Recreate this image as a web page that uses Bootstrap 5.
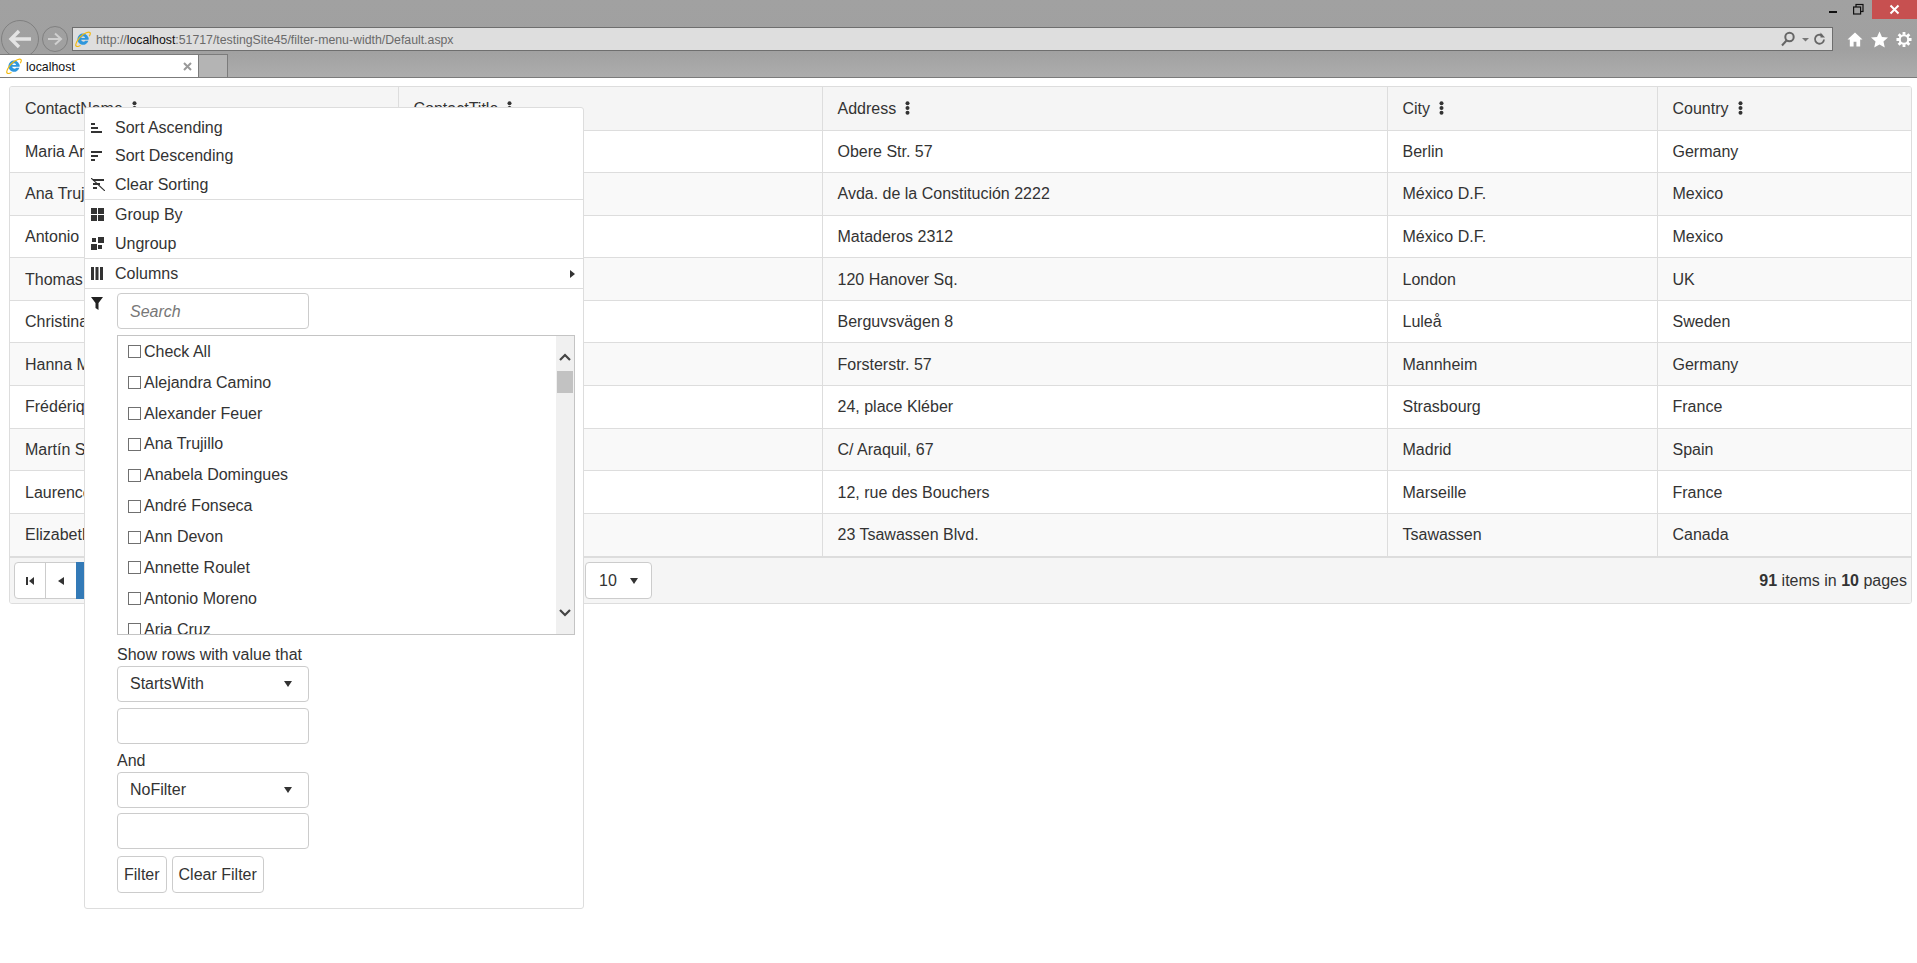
<!DOCTYPE html>
<html lang="en">
<head>
  <meta charset="UTF-8" />
  <title>localhost</title>
  <link href="https://cdn.jsdelivr.net/npm/bootstrap@5.3.2/dist/css/bootstrap.min.css" rel="stylesheet">
  <style>
    body { font-family: "Liberation Sans", Arial, sans-serif; font-size: 16px; color: #333; background: #fff; height: 963px; overflow: hidden; }

    /* browser chrome */
    .ie-chrome { height: 78px; background: linear-gradient(#a1a1a1 0, #a0a0a0 50px, #adadad 77px); border-bottom: 1px solid #7b7b7b; }
    .ie-winbar { height: 28px; }
    .ie-close { width: 45px; height: 19px; background: #c75050; }
    .ie-addr-row { height: 22px; padding: 0 5px 0 1px; }
    .ie-back { width: 38px; height: 38px; border: 1px solid #808080; border-radius: 50%; flex: none; position: relative; z-index: 1; }
    .ie-fwd { width: 26px; height: 26px; border: 1px solid #808080; border-radius: 50%; flex: none; margin: 0 4px 0 3px; }
    .ie-addr { flex: 1; height: 24px; background: #dedede; border: 1px solid #6e6e6e; font-size: 12.3px; color: #6a6a6a; padding: 0 5px 0 2px; white-space: nowrap; }
    .ie-addr b { font-weight: 400; color: #111; }
    .ie-addr-text { padding-top: 2px; }
    .ie-tools { width: 79px; padding-left: 14px; gap: 8px; }
    .ie-tabs { height: 23px; margin-top: 4px; }
    .ie-tab { width: 199px; height: 23px; background: #fff; border: 1px solid #7b7b7b; border-width: 1px 1px 0 0; font-size: 12.4px; color: #111; padding: 0 6px 0 6px; position: relative; z-index: 2; }
    .ie-tab-text { margin-left: -1px; padding-top: 2px; }
    .ie-newtab { width: 29px; height: 23px; background: #b4b4b4; border: 1px solid #7b7b7b; border-width: 1px 1px 0 0; }
    .ie-logo { flex: none; margin-right: 5px; }

    /* grid */
    .gv-wrap { margin: 8px 5px 0 9px; border: 1px solid #ddd; border-radius: 3px; overflow: hidden; }
    .gv-table { table-layout: fixed; margin: 0; width: 100%; --bs-table-color: #333; --bs-table-border-color: #ddd; }
    .gv-table th { background: #f5f5f5; height: 43px; font-weight: 400; padding: 1px 15px 0; vertical-align: middle; white-space: nowrap; }
    .gv-table td { height: 42.6px; padding: 1px 15px 0; vertical-align: middle; white-space: nowrap; }
    .gv-table tbody tr:nth-child(even) td { background: #f9f9f9; }
    .gv-table th + th, .gv-table td + td { border-left: 1px solid #ddd; }
    .gv-table tbody tr:last-child td { border-bottom: 0; }
    .kebab { margin-left: 9px; vertical-align: -1px; }
    .gv-pager { height: 47px; background: #f5f5f5; border-top: 2px solid #ddd; padding: 1px 4px 0; }
    .pg-group { height: 37px; }
    .pg-btn { width: 32px; height: 37px; background: #fff; border: 1px solid #ccc; margin-left: -1px; }
    .pg-btn:first-child { margin-left: 0; border-radius: 4px 0 0 4px; }
    .pg-num { background: #337ab7; border-color: #337ab7; color: #fff; width: 40px; }
    .pg-spacer { width: 345px; flex: none; }
    .pg-size { width: 67px; height: 37px; background: #fff; border: 1px solid #ccc; border-radius: 4px; padding: 0 13px; margin-left: 124px; }
    .caret-dn { width: 0; height: 0; border: 4.5px solid transparent; border-top: 6px solid #333; border-bottom: 0; }

    /* column menu, lies over the grid */
    .col-menu { position: absolute; left: 84px; top: 107px; width: 500px; height: 802px; background: #fff; border: 1px solid #ddd; border-radius: 3px; z-index: 5; padding-top: 5.5px; }
    .cm-item { height: 28.6px; }
    .cm-sep-row { height: 29.5px; }
    .cm-ico { width: 30px; flex: none; padding-left: 6px; display: flex; }
    .cm-ico-wide { width: 32px; }
    .cm-sep { border-top: 1px solid #ddd; }
    .cm-filter { padding-top: 4.5px; }
    .cm-body { width: 458px; }
    .cm-field { width: 192px; height: 36px; border: 1px solid #ccc; border-radius: 4px; background: #fff; }
    .cm-search { padding: 0 12px; color: #777; font-style: italic; line-height: 35px; }
    .cm-list { height: 300px; margin-top: 6px; border: 1px solid #c4c4c4; }
    .cm-scroll { flex: 1; overflow: hidden; padding: 0 0 0 10px; }
    .cm-check { height: 30.9px; flex: none; }
    .cm-box { width: 13px; height: 13px; border: 1px solid #707070; margin-right: 3px; flex: none; }
    .cm-bar { width: 18px; background: #f0f0f0; padding: 15px 1px 15px; }
    .cm-thumb { height: 22px; background: #c2c2c2; margin: 8px 0 auto; }
    .cm-sel { padding: 0 12px; }
    .cm-label { height: 23px; line-height: 23px; }
    .cm-label-a { margin-top: 8px; }
    .cm-label-b { margin-top: 5px; }
    .cm-gap-s { margin-top: 0; }
    .cm-gap-m { margin-top: 6px; }
    .cm-gap-l { margin-top: 5px; }
    .cm-btns { margin-top: 7px; gap: 5px; }
    .cm-btn { height: 37px; border: 1px solid #ccc; border-radius: 4px; background: #fff; padding: 0 6px; color: #333; }
  </style>
</head>
<body>
  <div class="ie-chrome">
    <div class="ie-winbar d-flex justify-content-end">
      <div class="d-flex align-items-start">
        <svg width="8" height="19" class="me-3"><rect y="11" width="8" height="2" fill="#111"/></svg>
        <svg width="11" height="15" class="me-2" fill="none" stroke="#111" stroke-width="1.2"><rect x="3" y="4.500" width="7" height="7"/><rect x=".6" y="7" width="7" height="7" fill="#a0a0a0"/></svg>
        <div class="ie-close d-flex align-items-center justify-content-center">
          <svg width="11" height="11" stroke="#fff" stroke-width="2"><path d="M1.500 1.500l8 8M9.500 1.500l-8 8"/></svg>
        </div>
      </div>
    </div>
    <div class="ie-addr-row d-flex align-items-center">
      <div class="ie-back d-flex align-items-center justify-content-center">
        <svg width="24" height="20" fill="none" stroke="#e4e4e4" stroke-width="3.4"><path d="M23 10H3M11 2l-8 8 8 8"/></svg>
      </div>
      <div class="ie-fwd d-flex align-items-center justify-content-center">
        <svg width="16" height="14" fill="none" stroke="#d0d0d0" stroke-width="2"><path d="M1 7h13M8 1.500l6 5.500-6 5.500"/></svg>
      </div>
      <div class="ie-addr d-flex align-items-center">
        <svg class="ie-logo" width="16" height="16" viewBox="0 0 16 16">
          <path d="M8 2.600a5.600 5.600 0 0 1 5.600 6.200H6.200a2.200 2.200 0 0 0 4 .9h3.200A5.600 5.600 0 1 1 8 2.600zM6.200 6.900h3.900a2 2 0 0 0-3.900 0z" fill="#2f97dc" fill-rule="evenodd"/>
          <path d="M1 15C0 13.500 2.500 7.500 8 3.600c3-2 6-3 7-2 .7.900 0 2.400-.7 3.600M1 15c1 .9 3 .3 4.500-.5" fill="none" stroke="#f2b90f" stroke-width="1.200"/>
        </svg>
        <span class="ie-addr-text">http://<b>localhost</b>:51717/testingSite45/filter-menu-width/Default.aspx</span>
        <svg width="46" height="16" class="ms-auto" fill="none" stroke="#666" stroke-width="2"><circle cx="8.500" cy="6" r="4.200"/><path d="M5.500 9.500L1 14.500"/><path d="M21 7h7l-3.500 3.500z" fill="#777" stroke="none"/><path d="M43 8.500a4.500 4.500 0 1 1-2-4" stroke-width="1.800"/><path d="M39.500 1.500v5h4.500z" fill="#666" stroke="none"/></svg>
      </div>
      <div class="ie-tools d-flex align-items-center">
        <svg width="16" height="17" viewBox="0 0 17 17" fill="#fff"><path d="M8.500 1L.5 8.500h2.500V16h4v-5h3v5h4V8.500h2.500z"/></svg>
        <svg width="17" height="17" viewBox="0 0 18 17" fill="#fff"><path d="M9 0l2.600 5.800 6.400.7-4.800 4.200 1.400 6.300L9 13.800 3.400 17l1.400-6.300L0 6.500l6.400-.7z"/></svg>
        <svg width="16" height="17" viewBox="0 0 17 17" fill="none" stroke="#fff"><circle cx="8.500" cy="8.500" r="4.500" stroke-width="2.200"/><path d="M8.500 .5v3M8.500 13.500v3M.5 8.500h3M13.500 8.500h3M2.800 2.800L5 5M12 12l2.200 2.200M14.200 2.800L12 5M5 12l-2.200 2.200" stroke-width="3"/></svg>
      </div>
    </div>
    <div class="ie-tabs d-flex">
      <div class="ie-tab d-flex align-items-center">
        <svg class="ie-logo" width="16" height="16" viewBox="0 0 16 16">
          <path d="M8 2.600a5.600 5.600 0 0 1 5.600 6.200H6.200a2.200 2.200 0 0 0 4 .9h3.200A5.600 5.600 0 1 1 8 2.600zM6.200 6.900h3.900a2 2 0 0 0-3.900 0z" fill="#2f97dc" fill-rule="evenodd"/>
          <path d="M1 15C0 13.500 2.500 7.500 8 3.600c3-2 6-3 7-2 .7.900 0 2.400-.7 3.600M1 15c1 .9 3 .3 4.500-.5" fill="none" stroke="#f2b90f" stroke-width="1.200"/>
        </svg>
        <span class="ie-tab-text">localhost</span>
        <svg width="9" height="9" class="ms-auto" stroke="#999" stroke-width="2"><path d="M1 1l7 7M8 1L1 8"/></svg>
      </div>
      <div class="ie-newtab"></div>
    </div>
  </div>

  <div class="gv-wrap">
    <table class="table gv-table">
      <colgroup><col style="width:388px"><col style="width:424px"><col style="width:565px"><col style="width:270px"><col></colgroup>
      <thead>
        <tr>
          <th>ContactName<svg class="kebab" width="5" height="14" fill="#333"><circle cx="2.500" cy="2.300" r="2"/><circle cx="2.500" cy="7" r="2"/><circle cx="2.500" cy="11.700" r="2"/></svg></th>
          <th>ContactTitle<svg class="kebab" width="5" height="14" fill="#333"><circle cx="2.500" cy="2.300" r="2"/><circle cx="2.500" cy="7" r="2"/><circle cx="2.500" cy="11.700" r="2"/></svg></th>
          <th>Address<svg class="kebab" width="5" height="14" fill="#333"><circle cx="2.500" cy="2.300" r="2"/><circle cx="2.500" cy="7" r="2"/><circle cx="2.500" cy="11.700" r="2"/></svg></th>
          <th>City<svg class="kebab" width="5" height="14" fill="#333"><circle cx="2.500" cy="2.300" r="2"/><circle cx="2.500" cy="7" r="2"/><circle cx="2.500" cy="11.700" r="2"/></svg></th>
          <th>Country<svg class="kebab" width="5" height="14" fill="#333"><circle cx="2.500" cy="2.300" r="2"/><circle cx="2.500" cy="7" r="2"/><circle cx="2.500" cy="11.700" r="2"/></svg></th>
        </tr>
      </thead>
      <tbody>
        <tr><td>Maria Anders</td><td>Sales Representative</td><td>Obere Str. 57</td><td>Berlin</td><td>Germany</td></tr>
        <tr><td>Ana Trujillo</td><td>Owner</td><td>Avda. de la Constitución 2222</td><td>México D.F.</td><td>Mexico</td></tr>
        <tr><td>Antonio Moreno</td><td>Owner</td><td>Mataderos 2312</td><td>México D.F.</td><td>Mexico</td></tr>
        <tr><td>Thomas Hardy</td><td>Sales Representative</td><td>120 Hanover Sq.</td><td>London</td><td>UK</td></tr>
        <tr><td>Christina Berglund</td><td>Order Administrator</td><td>Berguvsvägen 8</td><td>Luleå</td><td>Sweden</td></tr>
        <tr><td>Hanna Moos</td><td>Sales Representative</td><td>Forsterstr. 57</td><td>Mannheim</td><td>Germany</td></tr>
        <tr><td>Frédérique Citeaux</td><td>Marketing Manager</td><td>24, place Kléber</td><td>Strasbourg</td><td>France</td></tr>
        <tr><td>Martín Sommer</td><td>Owner</td><td>C/ Araquil, 67</td><td>Madrid</td><td>Spain</td></tr>
        <tr><td>Laurence Lebihan</td><td>Owner</td><td>12, rue des Bouchers</td><td>Marseille</td><td>France</td></tr>
        <tr><td>Elizabeth Lincoln</td><td>Accounting Manager</td><td>23 Tsawassen Blvd.</td><td>Tsawassen</td><td>Canada</td></tr>
      </tbody>
    </table>
    <div class="gv-pager d-flex align-items-center">
      <div class="pg-group d-flex">
        <div class="pg-btn d-flex align-items-center justify-content-center"><svg width="8" height="8" fill="#333"><rect width="2" height="8"/><path d="M8 0v8L3 4z"/></svg></div>
        <div class="pg-btn d-flex align-items-center justify-content-center"><svg width="6" height="8" fill="#333"><path d="M6 0v8L0 4z"/></svg></div>
        <div class="pg-btn pg-num d-flex align-items-center justify-content-center">1</div>
      </div>
      <div class="pg-spacer"></div>
      <div class="pg-size d-flex align-items-center justify-content-between"><span>10</span><span class="caret-dn"></span></div>
      <div class="ms-auto"><b>91</b> items in <b>10</b> pages</div>
    </div>
  </div>

  <div class="col-menu">
    <div class="cm-item d-flex align-items-center">
      <span class="cm-ico"><svg width="12" height="10" fill="#333"><rect y="0" width="4" height="2"/><rect y="4" width="7" height="2"/><rect y="8" width="11" height="2"/></svg></span>Sort Ascending
    </div>
    <div class="cm-item d-flex align-items-center">
      <span class="cm-ico"><svg width="12" height="10" fill="#333"><rect y="0" width="11" height="2"/><rect y="4" width="7" height="2"/><rect y="8" width="4" height="2"/></svg></span>Sort Descending
    </div>
    <div class="cm-item d-flex align-items-center">
      <span class="cm-ico"><svg width="14" height="13" fill="#333"><rect x="2" y="1" width="11" height="2"/><rect x="2" y="5" width="7" height="2"/><rect x="2" y="9" width="4" height="2"/><path d="M0 0l14 13" stroke="#333" stroke-width="1.200"/></svg></span>Clear Sorting
    </div>
    <div class="cm-sep-row cm-sep d-flex align-items-center">
      <span class="cm-ico"><svg width="13" height="13" fill="#333"><rect width="6" height="6"/><rect x="7" width="6" height="6"/><rect y="7" width="6" height="6"/><rect x="7" y="7" width="6" height="6"/></svg></span>Group By
    </div>
    <div class="cm-sep-row d-flex align-items-center">
      <span class="cm-ico"><svg width="13" height="13" fill="#333"><rect y="1" x="1" width="4" height="4"/><rect x="7" width="6" height="6"/><rect y="7" width="6" height="6"/><rect x="7" y="8" width="4" height="4"/></svg></span>Ungroup
    </div>
    <div class="cm-sep-row cm-sep d-flex align-items-center justify-content-between">
      <div class="d-flex align-items-center"><span class="cm-ico"><svg width="12" height="13" fill="#333"><rect width="3" height="13"/><rect x="4.500" width="3" height="13"/><rect x="9" width="3" height="13"/></svg></span>Columns</div>
      <svg width="5" height="8" class="me-2" fill="#333"><path d="M0 0l5 4-5 4z"/></svg>
    </div>
    <div class="cm-filter cm-sep d-flex">
      <span class="cm-ico cm-ico-wide pt-1"><svg width="12" height="13" fill="#222"><path d="M0 0h12L7.500 6v7l-3-2V6z"/></svg></span>
      <div class="cm-body d-flex flex-column align-items-start">
        <div class="cm-field cm-search">Search</div>
        <div class="cm-list d-flex align-self-stretch">
          <div class="cm-scroll d-flex flex-column">
            <div class="cm-check d-flex align-items-center"><span class="cm-box"></span>Check All</div>
            <div class="cm-check d-flex align-items-center"><span class="cm-box"></span>Alejandra Camino</div>
            <div class="cm-check d-flex align-items-center"><span class="cm-box"></span>Alexander Feuer</div>
            <div class="cm-check d-flex align-items-center"><span class="cm-box"></span>Ana Trujillo</div>
            <div class="cm-check d-flex align-items-center"><span class="cm-box"></span>Anabela Domingues</div>
            <div class="cm-check d-flex align-items-center"><span class="cm-box"></span>André Fonseca</div>
            <div class="cm-check d-flex align-items-center"><span class="cm-box"></span>Ann Devon</div>
            <div class="cm-check d-flex align-items-center"><span class="cm-box"></span>Annette Roulet</div>
            <div class="cm-check d-flex align-items-center"><span class="cm-box"></span>Antonio Moreno</div>
            <div class="cm-check d-flex align-items-center"><span class="cm-box"></span>Aria Cruz</div>
          </div>
          <div class="cm-bar d-flex flex-column align-items-stretch">
            <svg width="16" height="12" fill="none" stroke="#444" stroke-width="2.200"><path d="M3 9l5-5 5 5"/></svg>
            <div class="cm-thumb"></div>
            <svg width="16" height="12" fill="none" stroke="#444" stroke-width="2.200"><path d="M3 3l5 5 5-5"/></svg>
          </div>
        </div>
        <div class="cm-label cm-label-a">Show rows with value that</div>
        <div class="cm-field cm-sel cm-gap-s d-flex align-items-center justify-content-between">StartsWith<span class="caret-dn me-1"></span></div>
        <div class="cm-field cm-gap-m"></div>
        <div class="cm-label cm-label-b">And</div>
        <div class="cm-field cm-sel cm-gap-s d-flex align-items-center justify-content-between">NoFilter<span class="caret-dn me-1"></span></div>
        <div class="cm-field cm-gap-l"></div>
        <div class="cm-btns d-flex">
          <button type="button" class="cm-btn">Filter</button>
          <button type="button" class="cm-btn">Clear Filter</button>
        </div>
      </div>
    </div>
  </div>
  <script src="https://cdn.jsdelivr.net/npm/bootstrap@5.3.2/dist/js/bootstrap.bundle.min.js"></script>
</body>
</html>
